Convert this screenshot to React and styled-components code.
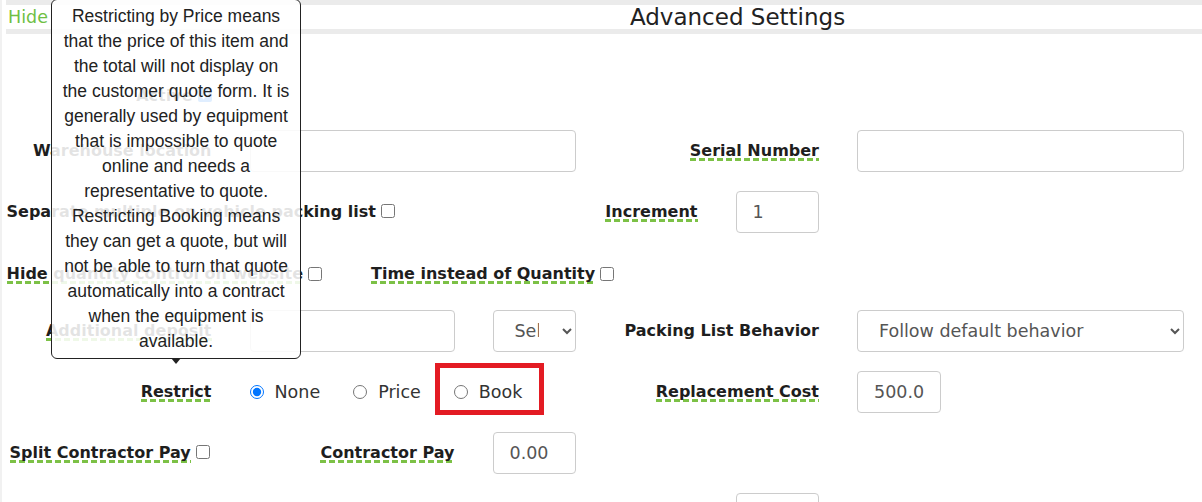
import React from 'react';
import styled, { createGlobalStyle } from 'styled-components';

const GlobalStyle = createGlobalStyle`
  html, body {
    margin: 0;
    padding: 0;
    overflow: hidden;
    background: #fff;
  }
  body {
    font-family: "DejaVu Sans", sans-serif;
    color: #212121;
  }
`;

const Page = styled.div`
  position: relative;
  min-height: 502px;
  border-left: 2px solid #f1f1f1;
`;

const Header = styled.div`
  margin-left: 4px;
  height: 24px;
  border-top: 5px solid #ebebeb;
  border-bottom: 5px solid #ebebeb;
  display: flex;
  align-items: center;
`;

const HideLink = styled.a`
  padding-left: 2px;
  color: #6fbf44;
  font-size: 17.5px;
  text-decoration: none;
  cursor: pointer;
`;

const Title = styled.h2`
  margin: 0 0 0 582px;
  font-size: 23px;
  font-weight: normal;
  line-height: 24px;
  color: #222;
`;

const Form = styled.div`
  padding: 47px 0 0 4.5px;
  display: flex;
  flex-direction: column;
  gap: 19px;
`;

const Row = styled.div`
  display: grid;
  grid-template-columns: repeat(10, 83.5px);
  column-gap: 38px;
  align-items: center;
  box-sizing: border-box;
  height: ${({ $h }) => $h || 42}px;
  padding-top: ${({ $padTop }) => $padTop || 0}px;
`;

const Cell = styled.div`
  grid-column: ${({ $col, $span }) => `${$col + 1} / span ${$span || 1}`};
  display: flex;
  align-items: center;
  justify-content: ${({ $right }) => ($right ? 'flex-end' : 'flex-start')};
  padding-left: ${({ $indent }) => $indent || 0}px;
  white-space: nowrap;
`;

const Label = styled.span`
  position: relative;
  display: inline-block;
  padding-bottom: 2px;
  font-size: 16px;
  font-weight: bold;
  line-height: 17px;
  color: #1e1e1e;
  background: ${({ $dashed }) =>
    $dashed
      ? 'repeating-linear-gradient(to right, #7cc146 0 6px, transparent 6px 9px) left bottom / 100% 3px no-repeat'
      : 'none'};
`;

const Check = styled.input.attrs({ type: 'checkbox' })`
  width: 14px;
  height: 14px;
  margin: 0 0 2px 5px;
`;

const TextInput = styled.input`
  width: 100%;
  height: 42px;
  box-sizing: border-box;
  padding: 0 16px;
  border: 1px solid #ccc;
  border-radius: 4px;
  background: #fff;
  font-family: "DejaVu Sans", sans-serif;
  font-size: 17.5px;
  color: #555;
  outline: none;
`;

const Select = styled.select`
  width: 100%;
  height: 42px;
  box-sizing: border-box;
  padding: 0 ${({ $narrow }) => ($narrow ? 20 : 8)}px 0 17px;
  border: 1px solid #ccc;
  border-radius: 4px;
  background: #fff;
  font-family: "DejaVu Sans", sans-serif;
  font-size: 17.5px;
  color: #555;
  outline: none;
`;

const RadioGroup = styled.div`
  display: flex;
  align-items: center;
  gap: 33px;
`;

const RadioOption = styled.label`
  position: relative;
  display: flex;
  align-items: center;
  gap: 11px;
  font-size: 17.5px;
  color: #333;

  input {
    width: 14px;
    height: 14px;
    margin: 0;
  }

  ${({ $marked }) =>
    $marked &&
    `&::after {
      content: '';
      position: absolute;
      left: -19px;
      right: -22px;
      top: -19px;
      bottom: -13px;
      border: 5px solid #e31b23;
    }`}
`;

const Tooltip = styled.div`
  position: absolute;
  left: 50%;
  bottom: calc(100% + 24px);
  transform: translateX(-50%);
  z-index: 10;
  width: 250px;
  box-sizing: border-box;
  padding: 4px 0;
  border: 1px solid #222;
  border-radius: 6px;
  background: rgba(255, 255, 255, 0.88);
  font-family: "Liberation Sans", Arial, sans-serif;
  font-size: 17.5px;
  font-weight: normal;
  line-height: 25px;
  color: #222;
  text-align: center;
  white-space: nowrap;

  &::after {
    content: '';
    position: absolute;
    left: 50%;
    top: 100%;
    margin-left: -5px;
    border-left: 5px solid transparent;
    border-right: 5px solid transparent;
    border-top: 6px solid #222;
  }
`;

const tipLines = [
  'Restricting by Price means',
  'that the price of this item and',
  'the total will not display on',
  'the customer quote form. It is',
  'generally used by equipment',
  'that is impossible to quote',
  'online and needs a',
  'representative to quote.',
  'Restricting Booking means',
  'they can get a quote, but will',
  'not be able to turn that quote',
  'automatically into a contract',
  'when the equipment is',
  'available.',
];

export default function App() {
  return (
    <Page>
      <GlobalStyle />
      <Header>
        <HideLink>Hide</HideLink>
        <Title>Advanced Settings</Title>
      </Header>

      <Form>
        <Row $h={30}>
          <Cell $col={0} $span={2} $right>
            <Label>Active</Label>
            <Check defaultChecked />
          </Cell>
        </Row>

        <Row>
          <Cell $col={0} $span={2} $right>
            <Label>Warehouse location</Label>
          </Cell>
          <Cell $col={2} $span={3}>
            <TextInput />
          </Cell>
          <Cell $col={5} $span={2} $right>
            <Label $dashed>Serial Number</Label>
          </Cell>
          <Cell $col={7} $span={3}>
            <TextInput />
          </Cell>
        </Row>

        <Row>
          <Cell $col={0} $span={4}>
            <Label>Separate multiple on vehicle packing list</Label>
            <Check />
          </Cell>
          <Cell $col={4} $span={2} $right>
            <Label $dashed>Increment</Label>
          </Cell>
          <Cell $col={6}>
            <TextInput defaultValue="1" />
          </Cell>
        </Row>

        <Row $h={39} $padTop={6}>
          <Cell $col={0} $span={3}>
            <Label $dashed>Hide quantity control on website</Label>
            <Check />
          </Cell>
          <Cell $col={3} $span={3}>
            <Label $dashed>Time instead of Quantity</Label>
            <Check />
          </Cell>
        </Row>

        <Row>
          <Cell $col={0} $span={2} $right>
            <Label $dashed>Additional deposit</Label>
          </Cell>
          <Cell $col={2} $span={2}>
            <TextInput />
          </Cell>
          <Cell $col={4}>
            <Select $narrow defaultValue="">
              <option value="">Select</option>
              <option value="pct">%</option>
              <option value="amt">$</option>
            </Select>
          </Cell>
          <Cell $col={5} $span={2} $right>
            <Label>Packing List Behavior</Label>
          </Cell>
          <Cell $col={7} $span={3}>
            <Select defaultValue="default">
              <option value="default">Follow default behavior</option>
            </Select>
          </Cell>
        </Row>

        <Row>
          <Cell $col={0} $span={2} $right>
            <Label $dashed>
              Restrict
              <Tooltip>
                {tipLines.map((line) => (
                  <div key={line}>{line}</div>
                ))}
              </Tooltip>
            </Label>
          </Cell>
          <Cell $col={2} $span={3}>
            <RadioGroup>
              <RadioOption>
                <input type="radio" name="restrict" defaultChecked />
                None
              </RadioOption>
              <RadioOption>
                <input type="radio" name="restrict" />
                Price
              </RadioOption>
              <RadioOption $marked>
                <input type="radio" name="restrict" />
                Book
              </RadioOption>
            </RadioGroup>
          </Cell>
          <Cell $col={5} $span={2} $right>
            <Label $dashed>Replacement Cost</Label>
          </Cell>
          <Cell $col={7}>
            <TextInput defaultValue="500.00" />
          </Cell>
        </Row>

        <Row>
          <Cell $col={0} $span={2} $indent={3}>
            <Label $dashed>Split Contractor Pay</Label>
            <Check />
          </Cell>
          <Cell $col={2} $span={2} $right>
            <Label $dashed>Contractor Pay</Label>
          </Cell>
          <Cell $col={4}>
            <TextInput defaultValue="0.00" />
          </Cell>
        </Row>

        <Row>
          <Cell $col={6}>
            <TextInput />
          </Cell>
        </Row>
      </Form>
    </Page>
  );
}
